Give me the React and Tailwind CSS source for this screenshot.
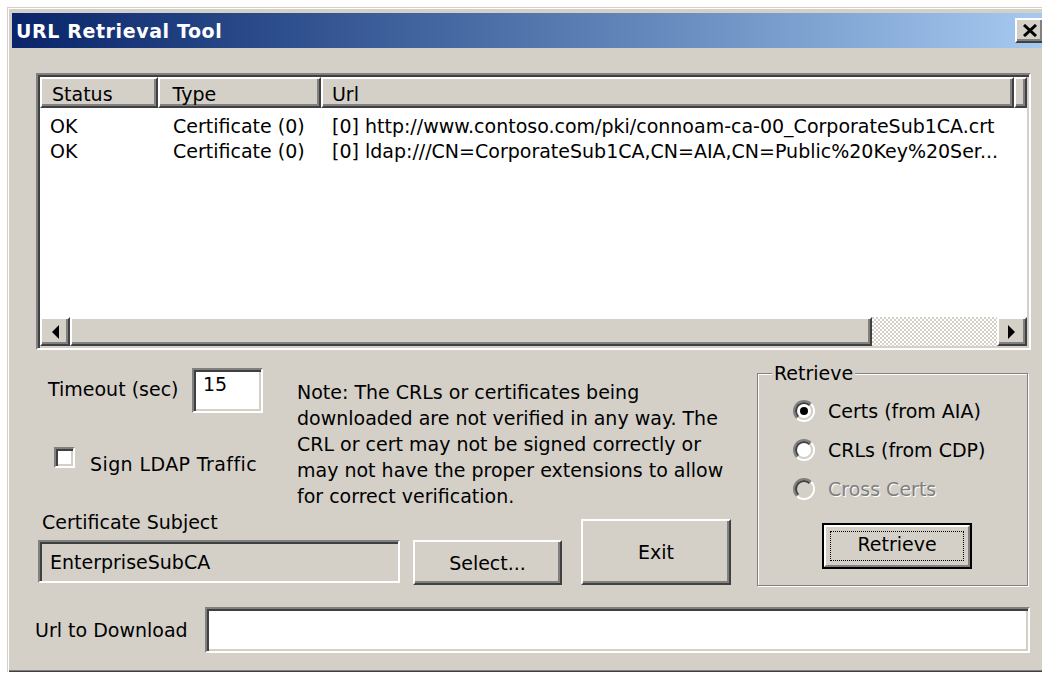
import React, { useState } from "react";

const raised =
  "bg-[#d4d0c8] border-2 border-t-white border-l-white border-r-[#404040] border-b-[#404040] shadow-[inset_-2px_-2px_0_#808080]";
const sunken =
  "border-2 border-t-[#808080] border-l-[#808080] border-r-white border-b-white shadow-[inset_2px_2px_0_#404040,inset_-2px_-2px_0_#d4d0c8]";

const COLS = ["w-[118px]", "w-[164px]", "w-[696px]", "w-[9px]"];

const ROWS = [
  {
    status: "OK",
    type: "Certificate (0)",
    url: "[0] http://www.contoso.com/pki/connoam-ca-00_CorporateSub1CA.crt",
  },
  {
    status: "OK",
    type: "Certificate (0)",
    url: "[0] ldap:///CN=CorporateSub1CA,CN=AIA,CN=Public%20Key%20Ser...",
  },
];

const NOTE = [
  "Note: The CRLs or certificates being",
  "downloaded are not verified in any way. The",
  "CRL or cert may not be signed correctly or",
  "may not have the proper extensions to allow",
  "for correct verification.",
];

function Arrow({ dir }) {
  return (
    <svg width="8" height="14" viewBox="0 0 8 14">
      {dir === "left" ? (
        <polygon points="8,0 8,14 1,7" fill="#000" />
      ) : (
        <polygon points="0,0 0,14 7,7" fill="#000" />
      )}
    </svg>
  );
}

function Radio({ label, checked, disabled, onClick }) {
  return (
    <div className="flex h-[22px] items-center" onClick={disabled ? undefined : onClick}>
      <div className="h-[22px] w-[22px] rounded-full border-2 border-t-[#808080] border-l-[#808080] border-r-white border-b-white">
        <div
          className={`flex h-full w-full items-center justify-center rounded-full border-2 border-t-[#404040] border-l-[#404040] border-r-[#d4d0c8] border-b-[#d4d0c8] ${
            disabled ? "bg-[#d4d0c8]" : "bg-white"
          }`}
        >
          {checked && <div className="h-[8px] w-[8px] rounded-full bg-black" />}
        </div>
      </div>
      <span
        className={`ml-[13px] leading-[22px] ${
          disabled ? "text-[#808080] [text-shadow:1px_1px_0_#fff]" : ""
        }`}
      >
        {label}
      </span>
    </div>
  );
}

export default function App() {
  const [source, setSource] = useState("aia");
  const [signLdap, setSignLdap] = useState(false);

  return (
    <div className="h-[673px] w-[1042px] overflow-hidden bg-white pl-[7px] pt-[7px] font-['DejaVu_Sans',sans-serif] text-[19px] leading-[22px] text-black">
      <div className="flex h-[665px] w-[1044px] flex-col bg-[#d4d0c8] px-[5px] pt-[6px] shadow-[inset_1px_1px_0_#d4d0c8,inset_2px_2px_0_#fff,inset_-1px_-1px_0_#404040,inset_-2px_-2px_0_#808080]">
        {/* title bar */}
        <div className="flex h-[35px] items-center justify-between bg-linear-to-r from-[#0a246a] to-[#a6caf0] pl-[4px] pr-[2px]">
          <span className="text-[19px] font-bold tracking-[0.6px] text-white">
            URL Retrieval Tool
          </span>
          <div className={`flex h-[25px] w-[29px] items-center justify-center ${raised}`}>
            <svg width="16" height="13" viewBox="0 0 16 13">
              <path d="M2 1 L14 12 M14 1 L2 12" stroke="#000" strokeWidth="3" />
            </svg>
          </div>
        </div>

        {/* list view */}
        <div className={`ml-[24px] mt-[25px] flex h-[277px] w-[995px] flex-col bg-white ${sunken}`}>
          <div className="ml-[2px] mt-[2px] flex h-[31px] w-[987px]">
            {["Status", "Type", "Url", ""].map((h, i) => (
              <div
                key={i}
                className={`${COLS[i]} flex items-center pt-[2px] ${raised} ${
                  i === 0 ? "pl-[10px]" : i === 1 ? "pl-[13px]" : "pl-[9px]"
                }`}
              >
                {h}
              </div>
            ))}
          </div>
          <div className="ml-[2px] flex-1 pt-[6px]">
            {ROWS.map((r, i) => (
              <div key={i} className="flex h-[25px] items-center whitespace-nowrap leading-[25px]">
                <div className={`${COLS[0]} pl-[10px]`}>{r.status}</div>
                <div className={`${COLS[1]} pl-[15px]`}>{r.type}</div>
                <div className={`${COLS[2]} pl-[10px]`}>{r.url}</div>
              </div>
            ))}
          </div>
          {/* horizontal scroll bar */}
          <div className="mb-[2px] ml-[2px] flex h-[29px] w-[987px]">
            <div className={`flex w-[30px] items-center justify-center ${raised}`}>
              <Arrow dir="left" />
            </div>
            <div className={`w-[802px] ${raised}`} />
            <div className="flex-1 bg-[repeating-conic-gradient(#ffffff_0_25%,#d4d0c8_0_50%)] bg-size-[4px_4px]" />
            <div className={`flex w-[30px] items-center justify-center ${raised}`}>
              <Arrow dir="right" />
            </div>
          </div>
        </div>

        {/* options area */}
        <div className="ml-[24px] flex items-start">
          <div className="flex w-[695px] flex-col">
            <div className="flex">
              <div className="flex w-[261px] flex-col">
                <div className="mt-[18px] flex items-start">
                  <span className="w-[156px] whitespace-nowrap pl-[12px] pt-[10px]">Timeout (sec)</span>
                  <div className={`h-[45px] w-[71px] bg-white pl-[9px] pt-[3px] ${sunken}`}>15</div>
                </div>
                <div
                  className="mt-[34px] flex items-start"
                  onClick={() => setSignLdap(!signLdap)}
                >
                  <div
                    className={`ml-[18px] flex h-[21px] w-[21px] items-center justify-center bg-white ${sunken}`}
                  >
                    {signLdap && (
                      <svg width="11" height="10" viewBox="0 0 11 10">
                        <path d="M1 5 L4 8 L10 1" stroke="#000" strokeWidth="2" fill="none" />
                      </svg>
                    )}
                  </div>
                  <span className="ml-[15px] mt-[6px] whitespace-nowrap tracking-[0.4px]">Sign LDAP Traffic</span>
                </div>
              </div>
              <div className="mt-[29px] whitespace-nowrap leading-[26px]">
                {NOTE.map((line) => (
                  <div key={line}>{line}</div>
                ))}
              </div>
            </div>

            <div className="flex items-end">
              <div className="flex flex-col">
                <span className="ml-[6px] mt-[2px]">Certificate Subject</span>
                <div className="mt-[7px] flex items-start">
                  <div className={`ml-[2px] flex h-[43px] w-[362px] items-center pl-[10px] ${sunken}`}>
                    EnterpriseSubCA
                  </div>
                  <div className={`ml-[13px] flex h-[45px] w-[149px] items-center justify-center ${raised}`}>
                    Select...
                  </div>
                </div>
              </div>
              <div className={`ml-[19px] flex h-[66px] w-[150px] items-center justify-center ${raised}`}>
                Exit
              </div>
            </div>
          </div>

          {/* retrieve group */}
          <div className="relative ml-[26px] mt-[23px] h-[213px] w-[271px] border border-[#808080] shadow-[1px_1px_0_#fff,inset_1px_1px_0_#fff]">
            <span className="absolute -top-[12px] left-[14px] bg-[#d4d0c8] px-[2px]">Retrieve</span>
            <div className="flex flex-col gap-[17px] pl-[35px] pt-[26px]">
              <Radio label="Certs (from AIA)" checked={source === "aia"} onClick={() => setSource("aia")} />
              <Radio label="CRLs (from CDP)" checked={source === "cdp"} onClick={() => setSource("cdp")} />
              <Radio label="Cross Certs" disabled />
            </div>
            <div className="ml-[64px] mt-[23px] h-[46px] w-[150px] border-2 border-black">
              <div className="h-full w-full border-2 border-t-white border-l-white border-r-[#808080] border-b-[#808080] p-[4px]">
                <div className="flex h-full w-full items-center justify-center border border-dotted border-black pb-[4px]">
                  Retrieve
                </div>
              </div>
            </div>
          </div>
        </div>

        {/* url to download */}
        <div className="ml-[23px] mt-[21px] flex items-center">
          <span className="w-[170px] whitespace-nowrap">Url to Download</span>
          <div className={`h-[46px] w-[825px] bg-white ${sunken}`} />
        </div>
      </div>
    </div>
  );
}
